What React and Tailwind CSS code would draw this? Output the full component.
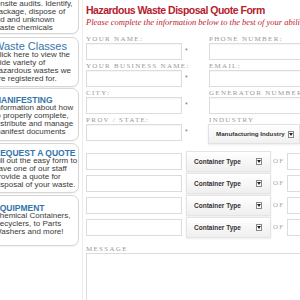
import React from "react";

const sideBoxes = [
  {
    title: null,
    box: "-mt-[10px] h-[44px] pt-[9px]",
    lines: ["Onsite audits. Identify,", "package, dispose of", "old and unknown", "waste chemicals"],
  },
  {
    title: "Waste Classes",
    big: true,
    box: "mt-[3px] h-[50px] pt-[4px]",
    lines: ["Click here to view the", "wide variety of", "hazardous wastes we", "are registered for."],
  },
  {
    title: "MANIFESTING",
    box: "mt-[1px] h-[53px] pt-[7px]",
    lines: ["Information about how", "to properly complete,", "distribute and manage", "manifest documents"],
  },
  {
    title: "REQUEST A QUOTE",
    box: "mt-[2px] h-[50px] pt-[5px]",
    lines: ["Fill out the easy form to", "have one of our staff", "provide a quote for", "disposal of your waste."],
  },
  {
    title: "EQUIPMENT",
    box: "mt-[2px] h-[51px] pt-[8px]",
    lines: ["Chemical Containers,", "Recyclers, to Parts", "Washers and more!"],
  },
];

function Arrow() {
  return (
    <span className="flex h-[7px] w-[6px] shrink-0 items-center justify-center border border-[#888] bg-white">
      <span className="block h-0 w-0 border-x-[2px] border-t-[3px] border-x-transparent border-t-[#222]" />
    </span>
  );
}

function Label({ children }) {
  return (
    <div className="h-[8px] whitespace-nowrap font-['Liberation_Serif',serif] text-[7px] uppercase leading-[8px] tracking-[1.3px] text-[#999]">
      {children}
    </div>
  );
}

function Field({ label, star }) {
  return (
    <div>
      <Label>{label}</Label>
      <div className="flex items-center">
        <div className="h-[17px] w-[96px] shrink-0 border border-[#dcdcdc] bg-white shadow-[inset_0_1px_1px_rgba(0,0,0,0.04)]" />
        {star && <span className="ml-[3px] text-[7px] text-[#777]">*</span>}
      </div>
    </div>
  );
}

export default function App() {
  return (
    <div className="flex h-[300px] w-[300px] overflow-hidden bg-white font-['Liberation_Sans',sans-serif]">
      {/* Sidebar */}
      <div className="-ml-[14px] flex w-[93px] shrink-0 flex-col">
        {sideBoxes.map((b, i) => (
          <div
            key={i}
            className={`shrink-0 overflow-hidden rounded-[7px] border border-[#d6d6d6] bg-white pl-[7px] shadow-[0_1px_1px_rgba(0,0,0,0.05)] ${b.box}`}
          >
            {b.title && (
              <div
                className={
                  b.big
                    ? "whitespace-nowrap text-[11px] leading-[9px] text-[#3474ab]"
                    : "whitespace-nowrap text-[8.5px] font-bold leading-[8px] text-[#3474ab]"
                }
              >
                {b.title}
              </div>
            )}
            {b.lines.map((l) => (
              <div key={l} className="whitespace-nowrap text-[8px] leading-[8px] text-[#3a3a3a]">
                {l}
              </div>
            ))}
          </div>
        ))}
      </div>

      {/* Form */}
      <div className="ml-[3px] flex-1 border-l border-[#ececec] pl-[3px] pt-[4px]">
        <h1 className="whitespace-nowrap text-[10.5px] font-bold leading-[13px] tracking-[-0.5px] text-[#b5202e]">
          Hazardous Waste Disposal Quote Form
        </h1>
        <p className="whitespace-nowrap font-['Liberation_Serif',serif] text-[8.5px] italic leading-[11px] text-[#c0202e]">
          Please complete the information below to the best of your ability
        </p>

        <div className="mt-[7px] grid grid-cols-[123px_96px] gap-y-[2px]">
          <Field label="Your Name:" star />
          <Field label="Phone Number:" />
          <Field label="Your Business Name:" star />
          <Field label="Email:" />
          <Field label="City:" star />
          <Field label="Generator Number:" />
          <Field label="Prov / State:" star />
          <div>
            <Label>Industry</Label>
            <div className="-ml-[1px] flex h-[20px] w-[92px] items-center border border-[#e2e2e2] bg-gradient-to-b from-white to-[#f0f0f0] pl-[7px] pr-[5px] shadow-[0_1px_2px_rgba(0,0,0,0.08)]">
              <span className="flex-1 whitespace-nowrap text-[6.2px] font-bold text-[#333]">
                Manufacturing Industry
              </span>
              <Arrow />
            </div>
          </div>
        </div>

        <div className="mt-[7px] flex flex-col gap-[1px]">
          {[0, 1, 2, 3].map((i) => (
            <div key={i} className="flex h-[21px] items-center">
              <div className="h-[17px] w-[96px] shrink-0 border border-[#dcdcdc] bg-white" />
              <div className="ml-[4px] flex h-[21px] w-[85px] shrink-0 items-center border border-[#e4e4e4] bg-gradient-to-b from-white to-[#efefef] pl-[7px] pr-[8px] shadow-[0_1px_2px_rgba(0,0,0,0.08)]">
                <span className="flex-1 whitespace-nowrap text-[6.5px] font-bold text-[#333]">
                  Container Type
                </span>
                <Arrow />
              </div>
              <span className="ml-[2px] font-['Liberation_Serif',serif] text-[7px] tracking-[1.3px] text-[#aaa]">
                OF
              </span>
              <div className="ml-[2px] h-[17px] w-[40px] shrink-0 border border-[#dcdcdc] bg-white" />
            </div>
          ))}
        </div>

        <div className="mt-[7px]">
          <Label>Message</Label>
        </div>
        <div className="h-[80px] w-[230px] border border-[#dcdcdc] bg-white" />
      </div>
    </div>
  );
}
